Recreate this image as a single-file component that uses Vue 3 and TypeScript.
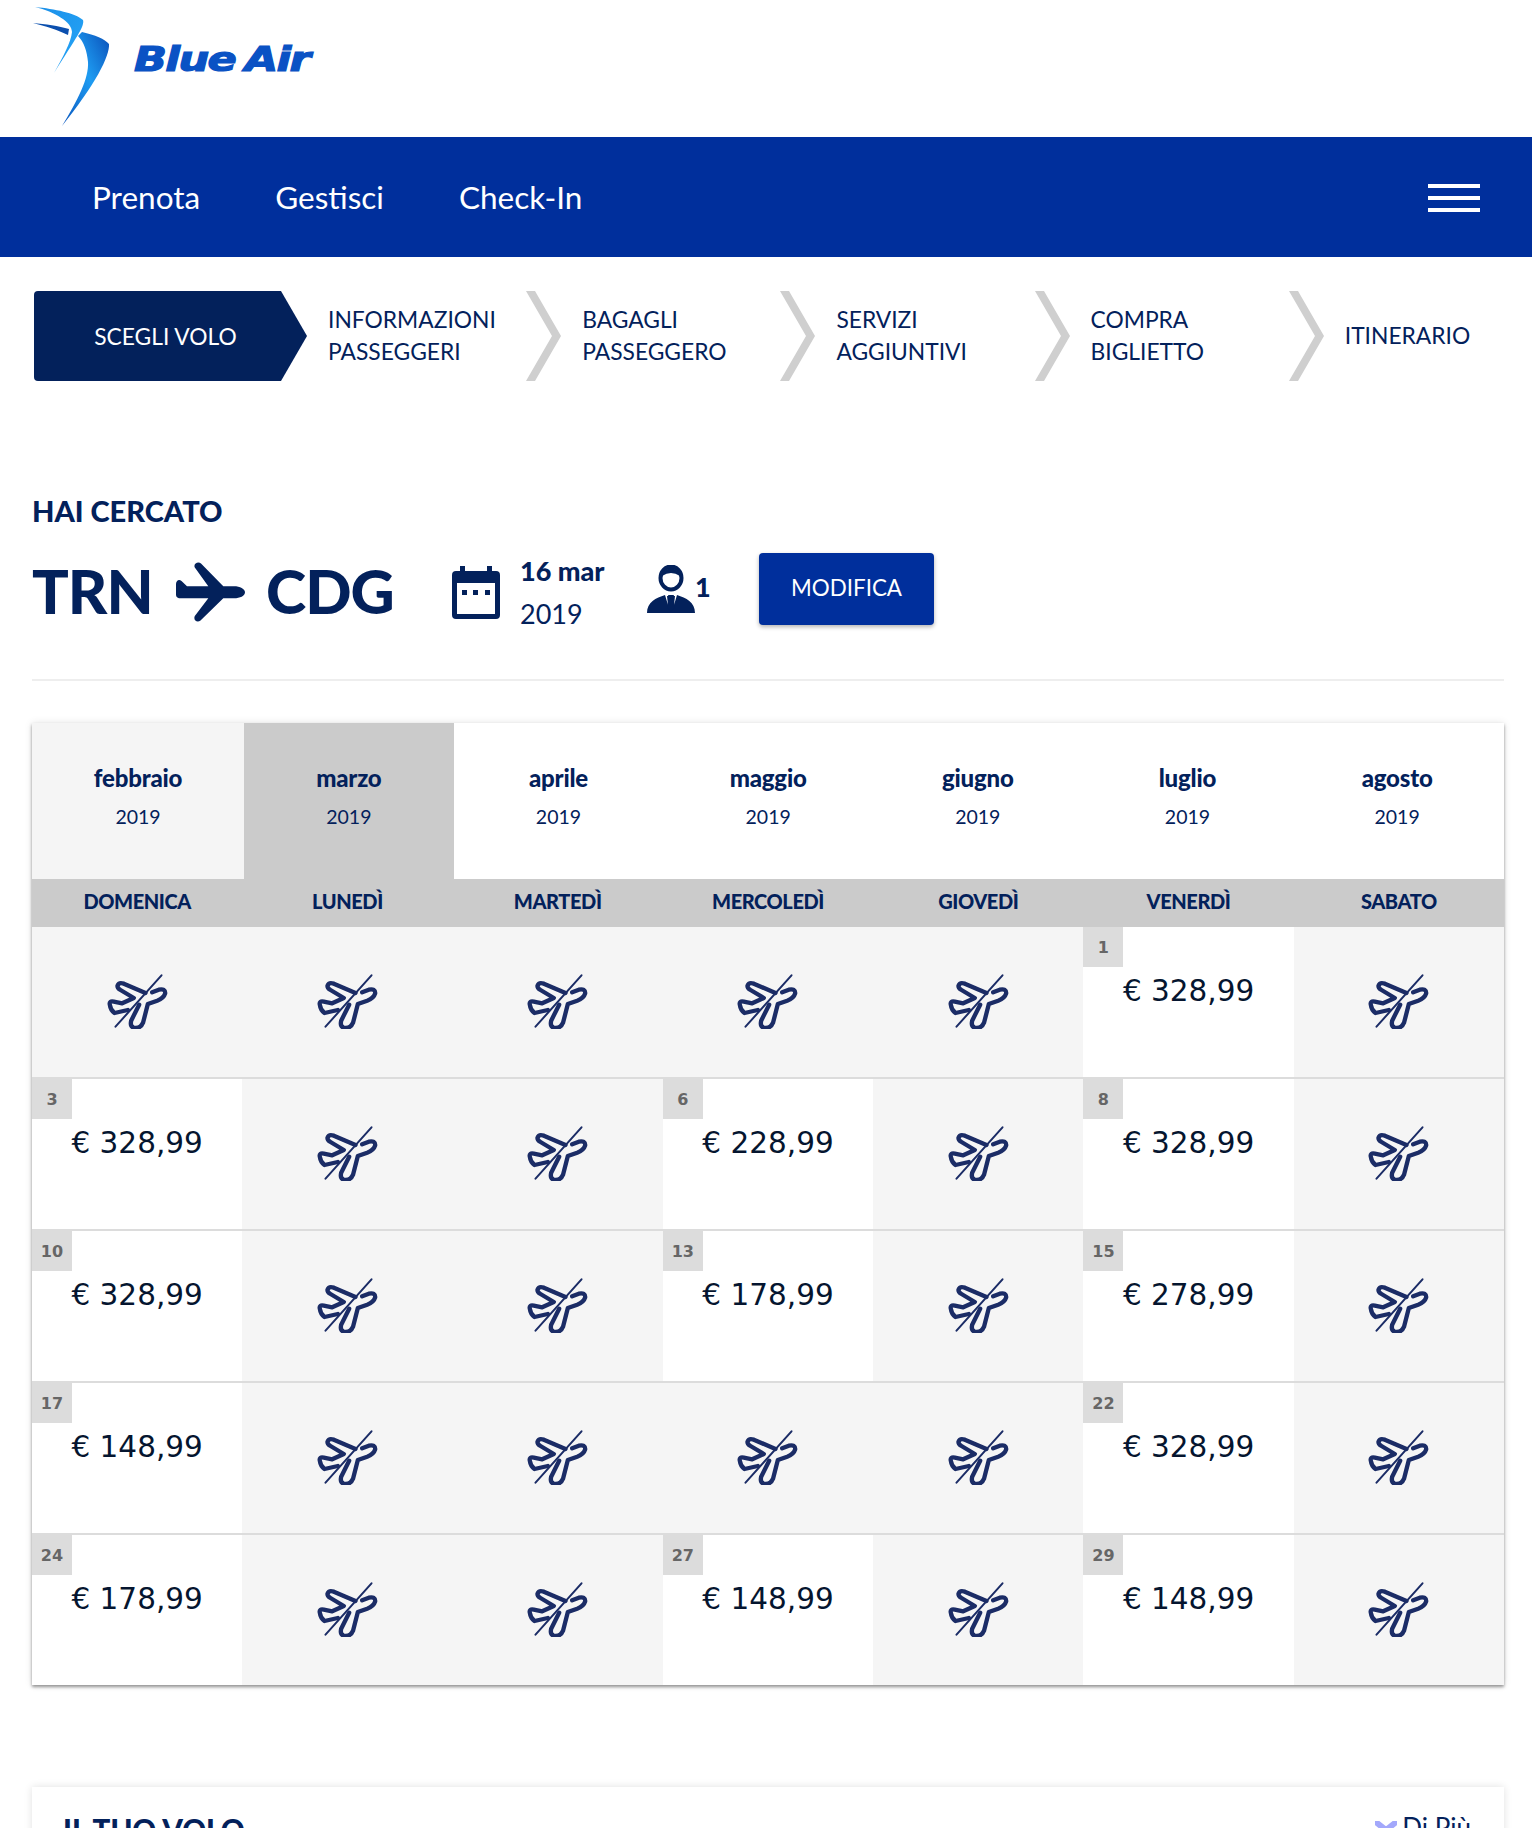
<script setup lang="ts">
type Day = { day: number; price: string } | null;

const steps = [
  ["INFORMAZIONI", "PASSEGGERI"],
  ["BAGAGLI", "PASSEGGERO"],
  ["SERVIZI", "AGGIUNTIVI"],
  ["COMPRA", "BIGLIETTO"],
  ["ITINERARIO"],
];
const months = ["febbraio", "marzo", "aprile", "maggio", "giugno", "luglio", "agosto"];
const weekdays = ["DOMENICA", "LUNEDÌ", "MARTEDÌ", "MERCOLEDÌ", "GIOVEDÌ", "VENERDÌ", "SABATO"];

const d = (day: number, price: string): Day => ({ day, price });
const rows: Day[][] = [
  [null, null, null, null, null, d(1, "328,99"), null],
  [d(3, "328,99"), null, null, d(6, "228,99"), null, d(8, "328,99"), null],
  [d(10, "328,99"), null, null, d(13, "178,99"), null, d(15, "278,99"), null],
  [d(17, "148,99"), null, null, null, null, d(22, "328,99"), null],
  [d(24, "178,99"), null, null, d(27, "148,99"), null, d(29, "148,99"), null],
];
</script>

<template>
  <div class="page">
    <header class="header">
      <svg class="logo" viewBox="0 0 134 137" width="134" height="137">
        <defs>
          <linearGradient id="wingMain" x1="1" y1="0" x2="0" y2="1">
            <stop offset="0" stop-color="#0a4fb8" />
            <stop offset="0.45" stop-color="#1e9cf2" />
            <stop offset="1" stop-color="#0b55bd" />
          </linearGradient>
          <linearGradient id="wingTop" x1="0" y1="0" x2="1" y2="1">
            <stop offset="0" stop-color="#1b8fe8" />
            <stop offset="1" stop-color="#25a6f8" />
          </linearGradient>
        </defs>
        <path d="M35 7C55 9 75 13 83 20C85 26 76 38 54 73C63 57 71 42 72 32C72 22 55 12 35 7Z" fill="url(#wingTop)" />
        <path d="M33 23C45 24 59 26 69 29L68 35C58 30 45 26 33 23Z" fill="#0b4fae" />
        <path d="M82 32C95 35 105 39 109 44C110 56 95 85 62 126C78 100 89 78 88 62C87 51 84 42 78 36Z" fill="url(#wingMain)" />
      </svg>
      <span class="brand">Blue Air</span>
    </header>

    <nav class="nav">
      <a>Prenota</a>
      <a>Gestisci</a>
      <a>Check-In</a>
      <span class="burger"><i></i><i></i><i></i></span>
    </nav>

    <div class="steps">
      <div class="step-active">SCEGLI VOLO</div>
      <div v-for="(s, i) in steps" :key="i" class="step">
        <div class="step-text">
          <div v-for="line in s" :key="line">{{ line }}</div>
        </div>
        <svg v-if="i < steps.length - 1" class="chev" viewBox="0 0 35 90" width="35" height="90">
          <path d="M0 0H9L35 45L9 90H0L26 45Z" fill="#cfcfcf" />
        </svg>
      </div>
    </div>

    <section class="search">
      <h2>HAI CERCATO</h2>
      <div class="route">
        <span class="code trn">TRN</span>
        <svg class="plane" viewBox="0 0 70 60" width="70" height="60">
          <path
            d="M69 30.3C69 27 64 24.3 58 24.3H47.3L25 1.5C22 -1 17 2 18.8 5.5L32.3 24.3H11L5.5 19C3 16.5 0 18.5 0 22V33C0 35.5 2 36.3 5 36.3H32.3L18.8 54C17 58 21 61 24.5 58.5L47.3 36.3H58C64 36.3 69 34 69 30.3Z"
            fill="#03215b"
          />
        </svg>
        <span class="code cdg">CDG</span>
        <svg class="cal" viewBox="0 0 48 54" width="48" height="54">
          <path d="M8 0H13V5H35V0H40V5H44Q48 5 48 9V49Q48 53 44 53H4Q0 53 0 49V9Q0 5 4 5H8Z" fill="#03215b" />
          <rect x="5" y="17" width="38" height="31" fill="#fff" />
          <rect x="10" y="24" width="5" height="5" fill="#03215b" />
          <rect x="21" y="24" width="5" height="5" fill="#03215b" />
          <rect x="33" y="24" width="5" height="5" fill="#03215b" />
        </svg>
        <div class="date">
          <strong>16 mar</strong>
          <span>2019</span>
        </div>
        <svg class="person" viewBox="0 0 48 48" width="48" height="48">
          <ellipse cx="24" cy="13" rx="10.5" ry="11.5" fill="none" stroke="#03215b" stroke-width="4" />
          <path d="M15 11Q24 5 33 11L33 7L24 2L15 7Z" fill="#03215b" />
          <path d="M0 48C0 37 9 33 18 30L21 40L20 31H28L27 40L30 30C39 33 48 37 48 48Z" fill="#03215b" />
          <path d="M21 30H27L26 33L28 42L24 47L20 42L22 33Z" fill="#03215b" />
        </svg>
        <span class="count">1</span>
        <button class="edit"><span>MODIFICA</span></button>
      </div>
    </section>

    <section class="calendar">
      <div class="months">
        <div
          v-for="(m, i) in months"
          :key="m"
          class="month"
          :class="{ first: i === 0, current: i === 1 }"
        >
          <strong>{{ m }}</strong>
          <span>2019</span>
        </div>
      </div>
      <div class="weekdays">
        <div v-for="w in weekdays" :key="w">{{ w }}</div>
      </div>
      <div v-for="(row, r) in rows" :key="r" class="row">
        <div v-for="(cell, c) in row" :key="c" class="cell" :class="{ open: cell }">
          <template v-if="cell">
            <span class="badge">{{ cell.day }}</span>
            <span class="price">€ {{ cell.price }}</span>
          </template>
          <svg v-else class="noflight" viewBox="50 70 182 165" width="61" height="55">
            <g fill="none" stroke="#1b2c66" stroke-linecap="round" stroke-linejoin="round">
              <path stroke-width="13" d="M165 127L100 99Q85 94 81 105Q80 112 90 118L130 142L95 158L70 153Q55 150 58 162Q60 178 72 187L112 178" />
              <path stroke-width="13" d="M185 125L205 117Q225 113 224 128Q220 142 200 150L172 160L158 215Q150 235 130 231Q118 228 122 210L146 162" />
              <path stroke-width="6" d="M75 228L213 74" />
            </g>
          </svg>
        </div>
      </div>
    </section>

    <section class="flight">
      <h2>IL TUO VOLO</h2>
      <span class="more">
        <svg viewBox="0 0 22 16" width="22" height="16">
          <path d="M2 2L11 9L20 2" fill="none" stroke="#a3a8fb" stroke-width="6" stroke-linecap="round" />
        </svg>
        Di Più
      </span>
    </section>
  </div>
</template>

<style scoped>
.page {
  width: 1532px;
  height: 1828px;
  overflow: hidden;
  font-family: "Lato", "Noto Sans", sans-serif;
  color: #03215b;
  background: #fff;
}

.header {
  height: 137px;
  display: flex;
  align-items: center;
}

.brand {
  font-family: "DejaVu Sans", sans-serif;
  font-weight: 700;
  font-style: italic;
  font-size: 34px;
  line-height: 1;
  word-spacing: -3px;
  letter-spacing: -1.3px;
  color: #0a52c4;
  transform: scaleX(1.27);
  transform-origin: left center;
  margin-bottom: 19px;
  -webkit-text-stroke: 1.2px #0a52c4;
}

.nav {
  height: 120px;
  background: #002f9c;
  display: flex;
  align-items: center;
  gap: 75px;
  padding: 0 52px 0 92px;
  color: #fff;
  font-size: 31.5px;
}

.burger {
  margin-left: auto;
  width: 52px;
  display: flex;
  flex-direction: column;
  gap: 8px;
  margin-top: 2px;
}

.burger i {
  display: block;
  height: 4px;
  background: #fff;
}

.steps {
  display: flex;
  margin: 34px 0 0 34px;
  height: 90px;
  font-size: 22.8px;
}

.step-active {
  width: 273px;
  height: 90px;
  flex: none;
  background: #03215b;
  color: #fff;
  display: flex;
  align-items: center;
  justify-content: center;
  padding-right: 10px;
  box-sizing: border-box;
  clip-path: polygon(0 0, 247px 0, 100% 50%, 247px 100%, 0 100%);
  border-radius: 4px;
}

.step {
  width: 254.2px;
  flex: none;
  display: flex;
  align-items: center;
  justify-content: space-between;
  padding-left: 21px;
  box-sizing: border-box;
  line-height: 32px;
}

.step-text {
  margin-top: -2px;
}

.search {
  margin: 0 28px 0 32px;
  border-bottom: 2px solid #eee;
  padding-bottom: 54px;
}

.search h2 {
  margin: 113px 0 0;
  font-size: 29px;
  line-height: 34px;
  font-weight: 900;
}

.route {
  display: flex;
  align-items: center;
  height: 72px;
  margin-top: 25px;
}

.code {
  flex: none;
  font-size: 61px;
  font-weight: 900;
  line-height: 72px;
  margin-top: 4px;
  letter-spacing: -1px;
}

.code.trn {
  width: 119px;
}

.code.cdg {
  width: 127px;
}

.plane {
  flex: none;
  margin: 5px 20px 0 25px;
}

.cal {
  flex: none;
  margin: 7px 0 0 59px;
}

.date {
  display: flex;
  flex-direction: column;
  margin: 5px 0 0 20px;
  font-size: 27px;
  line-height: 43px;
  width: 127px;
}

.date strong {
  font-weight: 900;
}

.person {
  flex: none;
}

.count {
  font-size: 27px;
  font-weight: 900;
  margin-top: -5px;
  width: 64px;
}

.edit {
  width: 175px;
  height: 72px;
  padding: 0 0 3px;
  border: 0;
  border-radius: 4px;
  background: #002f9c;
  color: #fff;
  font: inherit;
  font-size: 22.4px;
  box-shadow: 0 2px 4px rgba(0, 0, 0, 0.3);
}

.calendar {
  margin: 42px 28px 0 32px;
  box-shadow: 0 2px 3px rgba(0, 0, 0, 0.4), 0 0 8px rgba(0, 0, 0, 0.1);
}

.months {
  display: grid;
  grid-template-columns: 212px repeat(6, 209.67px);
}

.weekdays,
.row {
  display: grid;
  grid-template-columns: repeat(7, 1fr);
}

.month {
  height: 156px;
  display: flex;
  flex-direction: column;
  align-items: center;
  padding-top: 40px;
  box-sizing: border-box;
  font-size: 19.5px;
}

.month strong {
  font-size: 24px;
  line-height: 30px;
  font-weight: 900;
  letter-spacing: -0.2px;
}

.month span {
  margin-top: 11px;
  line-height: 26px;
}

.month.first {
  background: #f5f5f5;
}

.month.current {
  background: #cbcbcb;
}

.weekdays {
  height: 48px;
  align-items: center;
  background: #cbcbcb;
  text-align: center;
  font-size: 20px;
  font-weight: 900;
  letter-spacing: -0.4px;
  padding-bottom: 4px;
  box-sizing: border-box;
}

.row {
  height: 152px;
  border-bottom: 2px solid #dcdcdc;
  box-sizing: border-box;
}

.row:last-child {
  height: 150px;
  border-bottom: 0;
}

.cell {
  background: #f5f5f5;
  display: flex;
  align-items: center;
  justify-content: center;
  position: relative;
}

.noflight {
  margin-top: -2px;
}

.cell.open {
  background: #fff;
  align-items: flex-start;
}

.badge {
  position: absolute;
  left: 0;
  top: 0;
  width: 40px;
  height: 40px;
  background: #dcdcdc;
  color: #666;
  font-family: "DejaVu Sans", sans-serif;
  font-weight: 700;
  font-size: 16px;
  line-height: 42px;
  text-align: center;
}

.price {
  margin-top: 46px;
  font-family: "DejaVu Sans", sans-serif;
  font-size: 29.5px;
  line-height: 36px;
  color: #05152f;
}

.flight {
  margin: 102px 28px 0 32px;
  height: 200px;
  display: flex;
  justify-content: space-between;
  padding: 24px 30px 0 31px;
  box-shadow: 0 0 8px rgba(0, 0, 0, 0.12);
}

.flight h2 {
  margin: 0;
  font-size: 29.5px;
  line-height: 38px;
  font-weight: 900;
}

.more {
  display: flex;
  gap: 5px;
  align-items: flex-start;
  font-size: 26px;
  line-height: 32px;
  margin-right: 3px;
}

.more svg {
  margin-top: 10px;
}
</style>

<style>
html,
body {
  margin: 0;
  background: #fff;
}
</style>
